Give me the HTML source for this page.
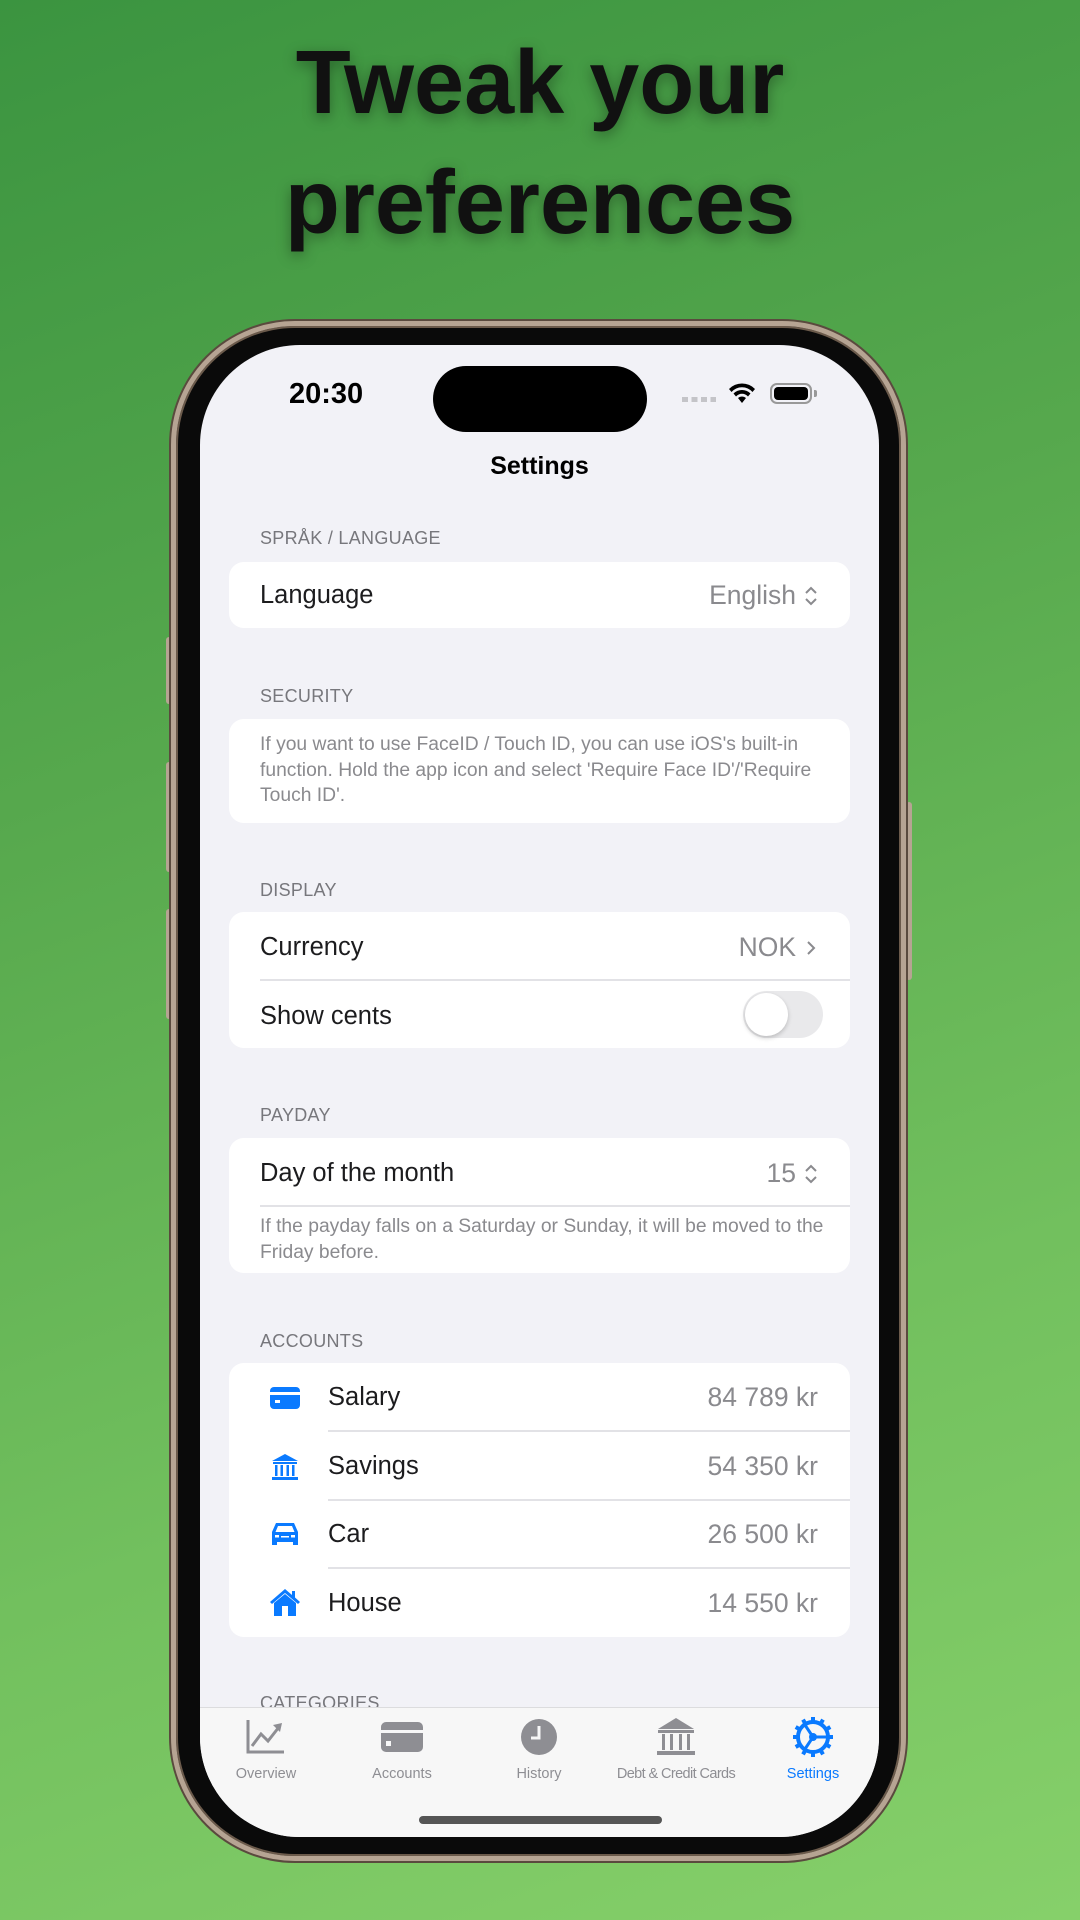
<!DOCTYPE html>
<html><head><meta charset="utf-8"><style>
*{margin:0;padding:0;box-sizing:border-box}
body{width:1080px;height:1920px;overflow:hidden;position:relative;font-family:"Liberation Sans",sans-serif;background:linear-gradient(160deg,#3b9440 0%,#56a84d 35%,#72c05e 70%,#86d06a 100%)}
.title{position:absolute;left:0;width:1080px;text-align:center;font-weight:900;font-size:90px;color:#111;text-shadow:0 4px 14px rgba(0,0,0,.35)}
.abs{position:absolute}
.frame{left:171px;top:321px;width:735px;height:1540px;border-radius:124px;background:#0a0a0a;border:5px solid #b6a493;box-shadow:0 0 0 2px #5a4a3e,inset 0 0 0 2px #6b5a4b}
.screen{left:200px;top:345px;width:679px;height:1492px;border-radius:100px;background:#f2f2f7;overflow:hidden}
.btn{background:#b6a493;border-radius:3px;width:6px}
.hdr{position:absolute;left:60px;font-size:18px;color:#77777c;letter-spacing:.3px}
.card{position:absolute;left:29px;width:621px;background:#fff;border-radius:15px}
.lbl{position:absolute;left:31px;font-size:25.5px;color:#1c1c1e}
.val{position:absolute;right:32px;font-size:26.5px;color:#8a8a8e;display:flex;align-items:center;gap:8px}
.sep{position:absolute;height:1.5px;background:#e2e2e6;right:0}
.small{position:absolute;left:31px;font-size:19.3px;color:#8a8a8e;line-height:25.7px}
.tab{position:absolute;top:1421px;width:160px;text-align:center;font-size:14.5px;color:#8e8e93;margin-left:-80px}
</style></head><body>
<div class="title" style="top:32px">Tweak your</div>
<div class="title" style="top:152px">preferences</div>

<div class="abs btn" style="left:166px;top:637px;height:67px"></div>
<div class="abs btn" style="left:166px;top:762px;height:110px"></div>
<div class="abs btn" style="left:166px;top:909px;height:110px"></div>
<div class="abs btn" style="left:906px;top:802px;height:178px"></div>
<div class="abs frame"></div>

<div class="abs screen">
 <div class="abs" style="left:89px;top:33px;font-size:29px;font-weight:bold;color:#000">20:30</div>
 <div class="abs" style="left:233px;top:21px;width:214px;height:66px;border-radius:33px;background:#000"></div>
 <div class="abs" style="left:482px;top:52px;width:34px;height:5px;background:repeating-linear-gradient(90deg,#c4c4c8 0 6px,transparent 6px 9.5px)"></div>
 <svg class="abs" style="left:527px;top:36px" width="30" height="24" viewBox="0 0 30 24"><path d="M15 22l-4-5a6 6 0 0 1 8 0z M6.5 12.5a12 12 0 0 1 17 0l-2.5 3a8 8 0 0 0-12 0z M2 8a18 18 0 0 1 26 0l-2.5 3a14 14 0 0 0-21 0z" fill="#000"/></svg>
 <div class="abs" style="left:570px;top:38px;width:42px;height:21px;border:2px solid #999;border-radius:7px;padding:2px"><div style="width:100%;height:100%;background:#000;border-radius:4px"></div></div>
 <div class="abs" style="left:614px;top:45px;width:3px;height:7px;background:#999;border-radius:0 2px 2px 0"></div>

 <div class="abs" style="left:0;width:679px;top:107px;text-align:center;font-size:25px;font-weight:bold;color:#000">Settings</div>

 <div class="hdr" style="top:183px">SPRÅK / LANGUAGE</div>
 <div class="card" style="top:217px;height:66px">
  <div class="lbl" style="top:19px">Language</div>
  <div class="val" style="top:18px">English <svg width="14" height="22" viewBox="0 0 14 22"><path d="M2 8l5-5 5 5M2 14l5 5 5-5" stroke="#8a8a8e" stroke-width="2" fill="none"/></svg></div>
 </div>

 <div class="hdr" style="top:341px">SECURITY</div>
 <div class="card" style="top:374px;height:104px">
  <div class="small" style="top:13px;width:560px">If you want to use FaceID / Touch ID, you can use iOS's built-in function. Hold the app icon and select 'Require Face ID'/'Require Touch ID'.</div>
 </div>

 <div class="hdr" style="top:535px">DISPLAY</div>
 <div class="card" style="top:567px;height:136px">
  <div class="lbl" style="top:21px">Currency</div>
  <div class="val" style="top:20px">NOK <svg width="14" height="22" viewBox="0 0 14 22"><path d="M4 5l6 6-6 6" stroke="#8a8a8e" stroke-width="2" fill="none"/></svg></div>
  <div class="sep" style="left:31px;top:67px"></div>
  <div class="lbl" style="top:90px">Show cents</div>
  <div class="abs" style="left:514px;top:79px;width:80px;height:47px;border-radius:24px;background:#e9e9eb"><div style="position:absolute;left:2px;top:2px;width:43px;height:43px;border-radius:50%;background:#fff;box-shadow:0 2px 5px rgba(0,0,0,.2)"></div></div>
 </div>

 <div class="hdr" style="top:760px">PAYDAY</div>
 <div class="card" style="top:793px;height:135px">
  <div class="lbl" style="top:21px">Day of the month</div>
  <div class="val" style="top:20px">15 <svg width="14" height="22" viewBox="0 0 14 22"><path d="M2 8l5-5 5 5M2 14l5 5 5-5" stroke="#8a8a8e" stroke-width="2" fill="none"/></svg></div>
  <div class="sep" style="left:31px;top:67px"></div>
  <div class="small" style="top:76px;width:570px">If the payday falls on a Saturday or Sunday, it will be moved to the Friday before.</div>
 </div>

 <div class="hdr" style="top:986px">ACCOUNTS</div>
 <div class="card" style="top:1018px;height:274px">
  <svg class="abs" style="left:40px;top:23px" width="32" height="24" viewBox="0 0 32 24"><rect x="1" y="1" width="30" height="22" rx="4" fill="#0a7aff"/><rect x="1" y="6" width="30" height="3" fill="#fff"/><rect x="6" y="14" width="5" height="3" fill="#fff"/></svg>
  <div class="lbl" style="left:99px;top:20px">Salary</div>
  <div class="val" style="top:19px">84 789 kr</div>
  <div class="sep" style="left:99px;top:67px"></div>
  <svg class="abs" style="left:41px;top:90px" width="30" height="28" viewBox="0 0 30 28"><path d="M15 1L2 8h26z" fill="#0a7aff"/><rect x="3" y="9" width="24" height="2" fill="#0a7aff"/><g fill="#0a7aff"><rect x="5" y="12" width="2.5" height="11"/><rect x="10.5" y="12" width="2.5" height="11"/><rect x="16.5" y="12" width="2.5" height="11"/><rect x="22" y="12" width="2.5" height="11"/></g><rect x="2" y="24" width="26" height="3" fill="#0a7aff"/></svg>
  <div class="lbl" style="left:99px;top:89px">Savings</div>
  <div class="val" style="top:88px">54 350 kr</div>
  <div class="sep" style="left:99px;top:136px"></div>
  <svg class="abs" style="left:40px;top:157px" width="32" height="28" viewBox="0 0 32 28"><path d="M7 3h18l4 9v13h-5v-3H8v3H3V12z" fill="#0a7aff"/><path d="M9 6h14l2.5 6h-19z" fill="#fff"/><rect x="6" y="15" width="4" height="2.5" fill="#fff"/><rect x="22" y="15" width="4" height="2.5" fill="#fff"/><rect x="12" y="16" width="8" height="1.5" fill="#fff"/></svg>
  <div class="lbl" style="left:99px;top:157px">Car</div>
  <div class="val" style="top:156px">26 500 kr</div>
  <div class="sep" style="left:99px;top:204px"></div>
  <svg class="abs" style="left:40px;top:224px" width="32" height="30" viewBox="0 0 32 30"><path d="M16 2L1 15l2 2 13-11 13 11 2-2-5-4.5V4h-3v4z" fill="#0a7aff"/><path d="M5 16L16 7l11 9v13H5z" fill="#0a7aff"/><rect x="13" y="19" width="6" height="10" fill="#fff"/></svg>
  <div class="lbl" style="left:99px;top:226px">House</div>
  <div class="val" style="top:225px">14 550 kr</div>
 </div>

 <div class="hdr" style="top:1348px">CATEGORIES</div>

 <div class="abs" style="left:0;top:1362px;width:679px;height:140px;background:#f7f7f7;border-top:1.5px solid #dcdcde"></div>
 <svg class="abs" style="left:45px;top:1373px" width="40" height="38" viewBox="0 0 40 38"><path d="M3 2v32h36" stroke="#8e8e93" stroke-width="3" fill="none"/><path d="M7 28l9-12 7 7 11-14" stroke="#8e8e93" stroke-width="3" fill="none"/><path d="M28 7l9-2-2 9z" fill="#8e8e93"/></svg>
 <svg class="abs" style="left:180px;top:1376px" width="44" height="32" viewBox="0 0 44 32"><rect x="1" y="1" width="42" height="30" rx="5" fill="#8e8e93"/><rect x="1" y="9" width="42" height="3" fill="#f7f7f7"/><rect x="6" y="20" width="5" height="5" fill="#f7f7f7"/></svg>
 <svg class="abs" style="left:320px;top:1373px" width="38" height="38" viewBox="0 0 38 38"><circle cx="19" cy="19" r="18" fill="#8e8e93"/><path d="M19 8v12h-8" stroke="#f7f7f7" stroke-width="3" fill="none"/></svg>
 <svg class="abs" style="left:454px;top:1372px" width="44" height="40" viewBox="0 0 44 40"><path d="M22 1L4 12h36z" fill="#8e8e93"/><rect x="4" y="13" width="36" height="3" fill="#8e8e93"/><g fill="#8e8e93"><rect x="8" y="17" width="3" height="16"/><rect x="16" y="17" width="3" height="16"/><rect x="25" y="17" width="3" height="16"/><rect x="33" y="17" width="3" height="16"/></g><rect x="3" y="34" width="38" height="4" fill="#8e8e93"/></svg>
 <svg class="abs" style="left:592px;top:1371px" width="42" height="42" viewBox="0 0 42 42"><g transform="translate(21 21)"><circle r="15" stroke="#0a7aff" stroke-width="4" fill="none"/><g fill="#0a7aff"><rect x="-2" y="-20" width="4" height="6"/><rect x="-2" y="-20" width="4" height="6" transform="rotate(30)"/><rect x="-2" y="-20" width="4" height="6" transform="rotate(60)"/><rect x="-2" y="-20" width="4" height="6" transform="rotate(90)"/><rect x="-2" y="-20" width="4" height="6" transform="rotate(120)"/><rect x="-2" y="-20" width="4" height="6" transform="rotate(150)"/><rect x="-2" y="-20" width="4" height="6" transform="rotate(180)"/><rect x="-2" y="-20" width="4" height="6" transform="rotate(210)"/><rect x="-2" y="-20" width="4" height="6" transform="rotate(240)"/><rect x="-2" y="-20" width="4" height="6" transform="rotate(270)"/><rect x="-2" y="-20" width="4" height="6" transform="rotate(300)"/><rect x="-2" y="-20" width="4" height="6" transform="rotate(330)"/></g><path d="M0 0L-8 -12M0 0L-8 12M0 0H14" stroke="#0a7aff" stroke-width="3"/><circle r="4" fill="#0a7aff"/></g></svg>
 <div class="tab" style="left:66px">Overview</div>
 <div class="tab" style="left:202px">Accounts</div>
 <div class="tab" style="left:339px">History</div>
 <div class="tab" style="left:476px;letter-spacing:-.6px">Debt &amp; Credit Cards</div>
 <div class="tab" style="left:613px;color:#0a7aff">Settings</div>
 <div class="abs" style="left:219px;top:1471px;width:243px;height:8px;border-radius:4px;background:#555"></div>
</div>
</body></html>
